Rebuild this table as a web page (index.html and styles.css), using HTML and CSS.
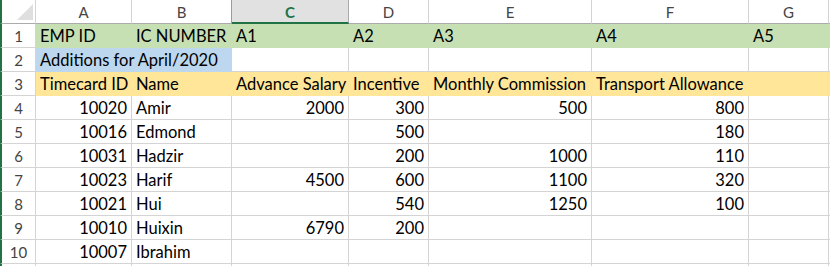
FILE: index.html
```html
<!DOCTYPE html>
<html>
<head>
<meta charset="utf-8">
<link rel="stylesheet" href="styles.css">
</head>
<body>
<div class="sheet">
  <div class="ch corner"><svg class="tri" width="16" height="16" viewBox="0 0 16 16"><polygon points="0,16 16,16 16,0" fill="#dfdfdf"/></svg></div>
  <div class="ch">A</div>
  <div class="ch sep">B</div>
  <div class="ch sel">C</div>
  <div class="ch">D</div>
  <div class="ch">E</div>
  <div class="ch">F</div>
  <div class="ch">G</div>
  <div class="ch last"></div>

  <div class="rh">1</div>
  <div class="c g">EMP ID</div>
  <div class="c g">IC NUMBER</div>
  <div class="c g">A1</div>
  <div class="c g">A2</div>
  <div class="c g">A3</div>
  <div class="c g">A4</div>
  <div class="c g">A5</div>
  <div class="c g"></div>

  <div class="rh">2</div>
  <div class="c b span2">Additions for April/2020</div>
  <div class="c"></div>
  <div class="c"></div>
  <div class="c"></div>
  <div class="c"></div>
  <div class="c"></div>
  <div class="c"></div>

  <div class="rh">3</div>
  <div class="c y">Timecard ID</div>
  <div class="c y">Name</div>
  <div class="c y">Advance Salary</div>
  <div class="c y">Incentive</div>
  <div class="c y">Monthly Commission</div>
  <div class="c y">Transport Allowance</div>
  <div class="c y"></div>
  <div class="c y"></div>

  <div class="rh">4</div>
  <div class="c n">10020</div>
  <div class="c">Amir</div>
  <div class="c n">2000</div>
  <div class="c n">300</div>
  <div class="c n">500</div>
  <div class="c n">800</div>
  <div class="c"></div>
  <div class="c"></div>

  <div class="rh">5</div>
  <div class="c n">10016</div>
  <div class="c">Edmond</div>
  <div class="c n"></div>
  <div class="c n">500</div>
  <div class="c n"></div>
  <div class="c n">180</div>
  <div class="c"></div>
  <div class="c"></div>

  <div class="rh">6</div>
  <div class="c n">10031</div>
  <div class="c">Hadzir</div>
  <div class="c n"></div>
  <div class="c n">200</div>
  <div class="c n">1000</div>
  <div class="c n">110</div>
  <div class="c"></div>
  <div class="c"></div>

  <div class="rh">7</div>
  <div class="c n">10023</div>
  <div class="c">Harif</div>
  <div class="c n">4500</div>
  <div class="c n">600</div>
  <div class="c n">1100</div>
  <div class="c n">320</div>
  <div class="c"></div>
  <div class="c"></div>

  <div class="rh">8</div>
  <div class="c n">10021</div>
  <div class="c">Hui</div>
  <div class="c n"></div>
  <div class="c n">540</div>
  <div class="c n">1250</div>
  <div class="c n">100</div>
  <div class="c"></div>
  <div class="c"></div>

  <div class="rh">9</div>
  <div class="c n">10010</div>
  <div class="c">Huixin</div>
  <div class="c n">6790</div>
  <div class="c n">200</div>
  <div class="c n"></div>
  <div class="c n"></div>
  <div class="c"></div>
  <div class="c"></div>

  <div class="rh">10</div>
  <div class="c n">10007</div>
  <div class="c">Ibrahim</div>
  <div class="c"></div>
  <div class="c"></div>
  <div class="c"></div>
  <div class="c"></div>
  <div class="c"></div>
  <div class="c"></div>

  <div class="rh"></div>
  <div class="c"></div>
  <div class="c"></div>
  <div class="c"></div>
  <div class="c"></div>
  <div class="c"></div>
  <div class="c"></div>
  <div class="c"></div>
  <div class="c"></div>
</div>
</body>
</html>
```
FILE: styles.css
```css
html, body {
  margin: 0;
  padding: 0;
  background: #ffffff;
  overflow: hidden;
}

.sheet {
  display: grid;
  grid-template-columns: 36px 96px 100px 117px 80px 163px 157px 80px 1fr;
  grid-auto-rows: 24px;
  width: 830px;
  height: 266px;
  overflow: hidden;
  font-family: Lato, "Liberation Sans", sans-serif;
}

.sheet > div {
  box-sizing: border-box;
  border-right: 1px solid #d4d4d4;
  border-bottom: 1px solid #d4d4d4;
  white-space: nowrap;
}

.ch {
  font-size: 15px;
  color: #444444;
  text-align: center;
  line-height: 20px;
  padding-top: 2px;
  border-bottom-color: #ababab !important;
}

.corner {
  border-left: 2px solid #217346;
  display: flex;
  justify-content: flex-end;
  align-items: flex-end;
  padding: 0 2px 3px 0 !important;
}

.tri {
  display: block;
}

.sep {
  border-right-color: #9b9b9b !important;
}

.sel {
  background: #e1e1e1;
  color: #217346;
  font-weight: bold;
  border-right-color: #ababab !important;
  border-bottom: 2px solid #217346 !important;
}

.rh {
  border-left: 2px solid #217346;
  font-size: 15px;
  color: #444444;
  text-align: center;
  line-height: 21px;
  padding-top: 2px;
}

.c {
  font-size: 16.5px;
  color: #000000;
  line-height: 21px;
  padding: 2px 3px 0 4px;
  overflow: visible;
}

.n {
  text-align: right;
  padding-right: 4px;
}

.g {
  background: #c6e0b4;
  border-color: #c6e0b4 !important;
}

.b {
  background: #bdd7ee;
  border-color: #bdd7ee !important;
}

.y {
  background: #ffe699;
  border-color: #ffe699 !important;
}

.span2 {
  grid-column: span 2;
}
```
